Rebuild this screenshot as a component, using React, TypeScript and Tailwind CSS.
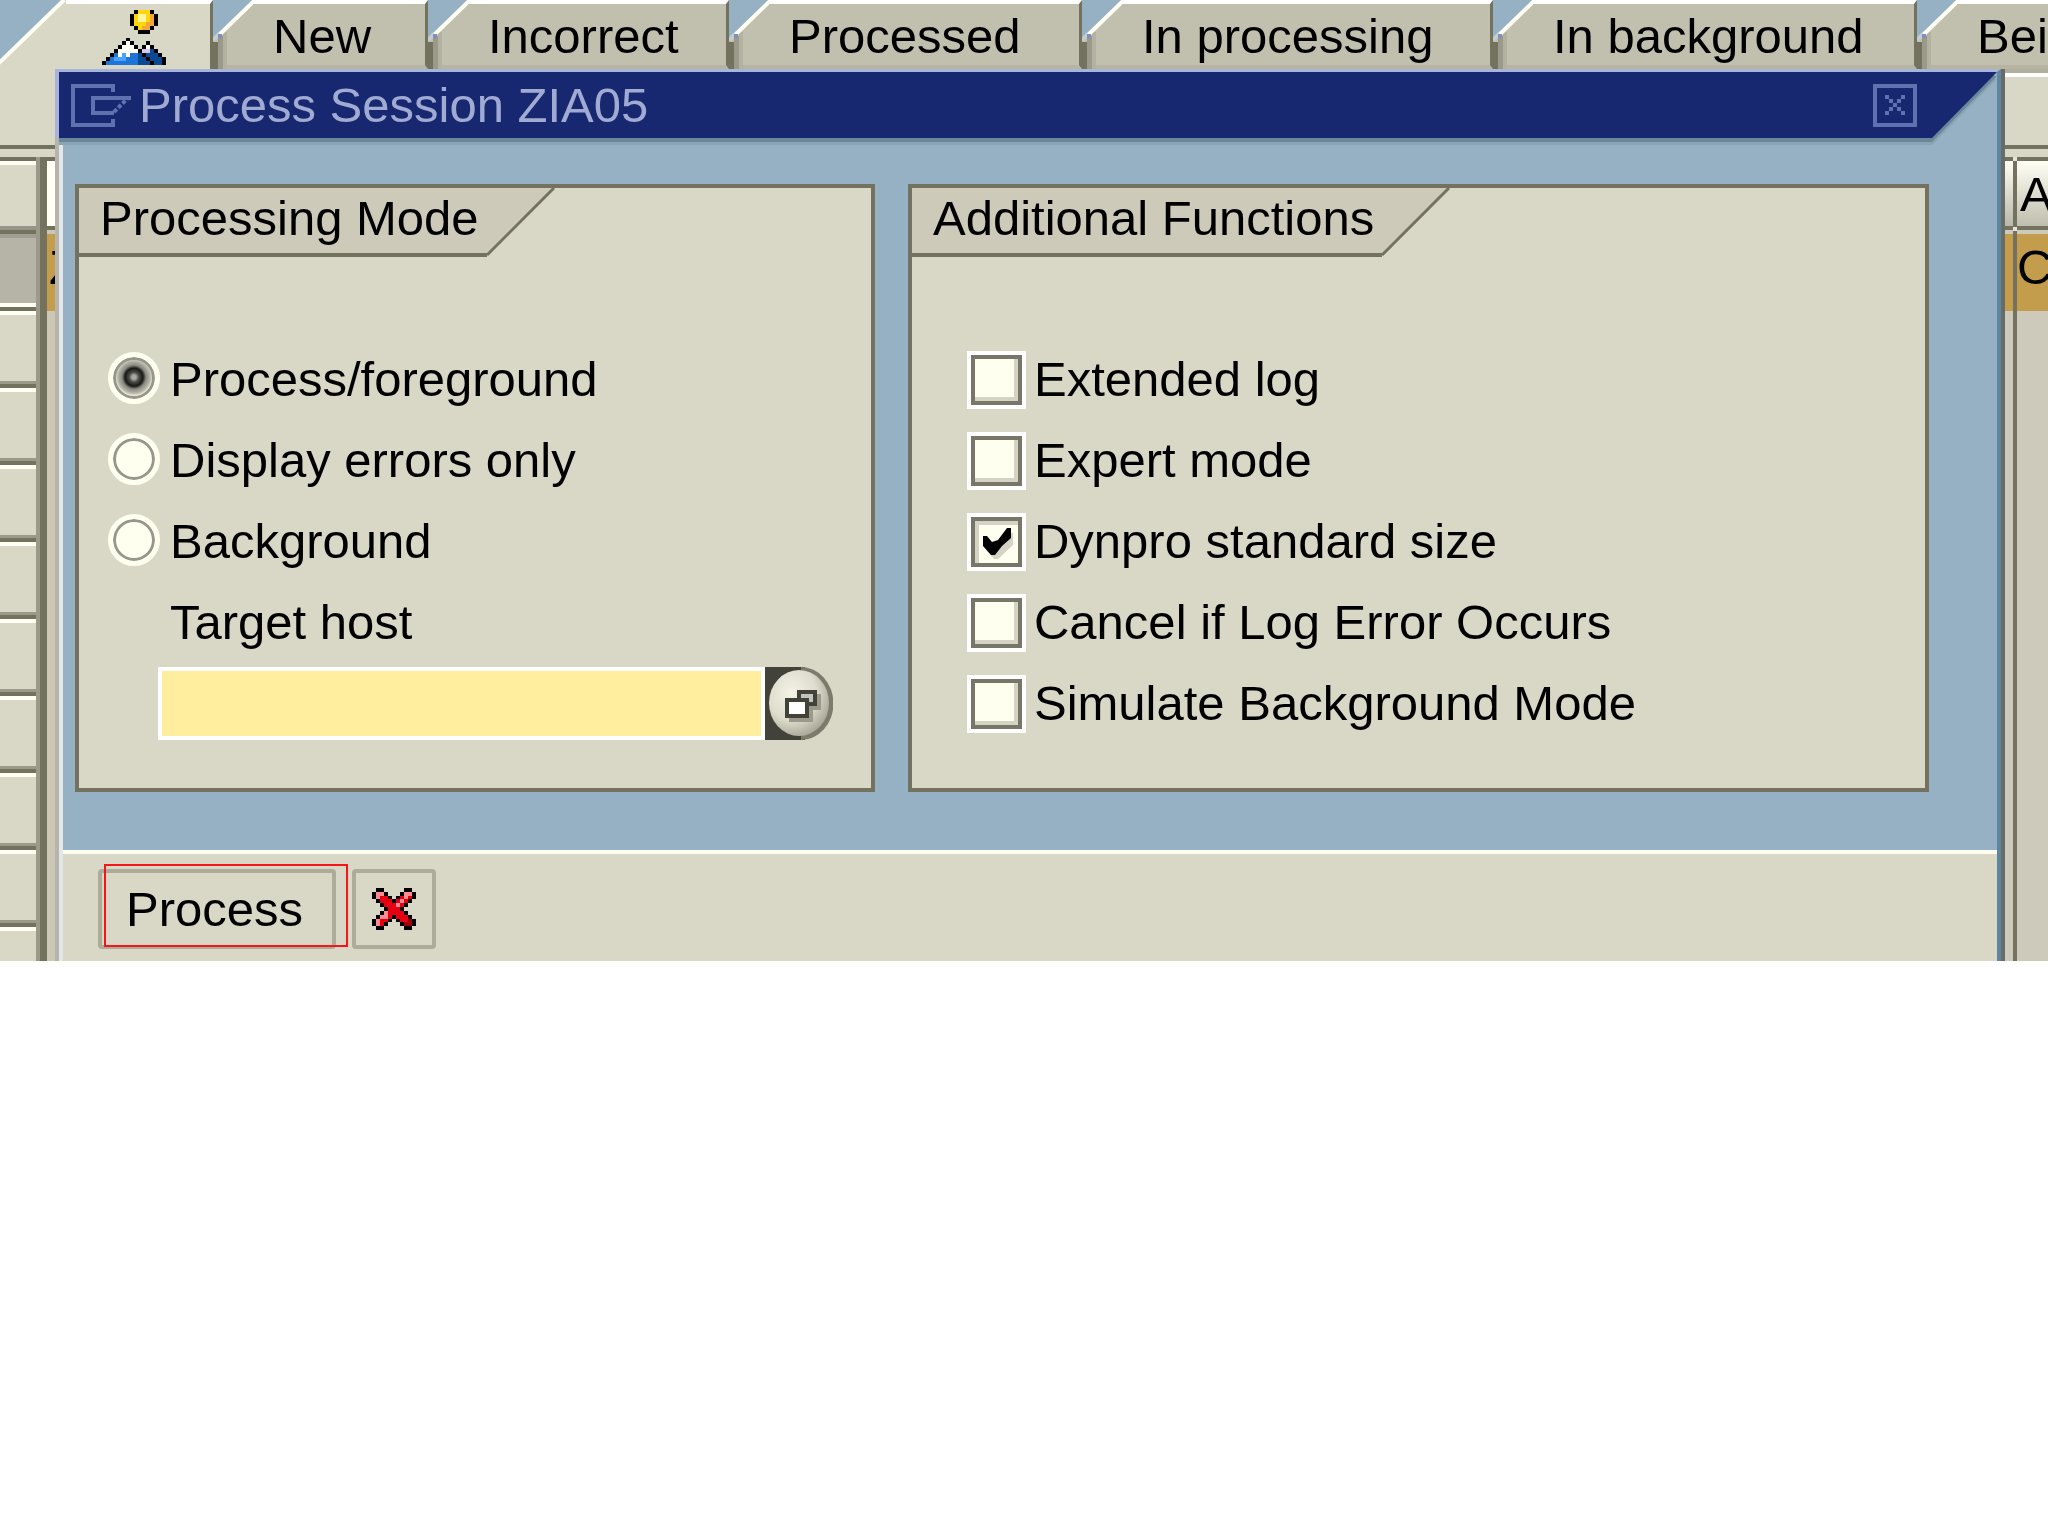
import React, { useState } from "react";

const tabs = [
  { label: "New", width: "w-[215px]" },
  { label: "Incorrect", width: "w-[301px]" },
  { label: "Processed", width: "w-[353px]" },
  { label: "In processing", width: "w-[411px]" },
  { label: "In background", width: "w-[424px]" },
  { label: "Bei", width: "w-[424px]" },
];

const modes = ["Process/foreground", "Display errors only", "Background"];

const functions = [
  "Extended log",
  "Expert mode",
  "Dynpro standard size",
  "Cancel if Log Error Occurs",
  "Simulate Background Mode",
];

const palette: Record<string, string> = {
  k: "#000000",
  w: "#fffff4",
  y: "#ffd60a",
  l: "#fff59a",
  o: "#f2a838",
  b: "#1f74d8",
  c: "#4aa3ff",
  d: "#0a4a94",
  p: "#d9c6ee",
  r: "#e60012",
  m: "#ff8a92",
  n: "#a00008",
};

const mountains = [
  "........kyyyk...",
  ".......kyllyok..",
  ".......kyllyok..",
  ".......kyyyook..",
  "........kyook...",
  ".........kkk....",
  "................",
  "......k.........",
  ".....kwk...k....",
  "....kwwwk.kwk...",
  "...kwwwwwkppdk..",
  "..kbwcwbbdkdddk.",
  ".kbcccbbbddkdddk",
  "kbbbbbbbbdddkddk",
];

const redCross = [
  ".kk.....kk.",
  "kmmk...kmmk",
  "kmrrk.krmrk",
  ".krrrkrmrk.",
  "..krrrmrk..",
  "...krrrk...",
  "..kmrrrrk..",
  ".kmmrkrrrk.",
  "kmrrk.krrnk",
  "kmrk...knnk",
  ".kk.....kk.",
];

function Pixels({ rows, className }: { rows: string[]; className: string }) {
  return (
    <svg
      viewBox={`0 0 ${rows[0].length} ${rows.length}`}
      preserveAspectRatio="none"
      shapeRendering="crispEdges"
      className={className}
      aria-hidden="true"
    >
      {rows.map((row, y) =>
        row.split("").map((c, x) =>
          c === "." ? null : <rect key={`${x}-${y}`} x={x} y={y} width={1} height={1} fill={palette[c]} />
        )
      )}
    </svg>
  );
}

function TabStrip() {
  return (
    <nav className="flex h-[69px] overflow-hidden bg-[#95b1c3]">
      {/* Active tab */}
      <button type="button" aria-label="Overview" className="flex w-[213px] shrink-0">
        <svg viewBox="0 0 66 69" className="h-[69px] w-[66px] shrink-0" aria-hidden="true">
          <path d="M0 62 L62 0 H66 V69 H0 Z" fill="#d9d8c6" />
          <path d="M-2 64 L64 0" stroke="#fffff4" strokeWidth="4" />
        </svg>
        <span className="flex h-full flex-1 border-t-4 border-r-[3px] border-t-white border-r-[#73725f] bg-[#d9d8c6] pt-[6px] pl-9">
          <Pixels rows={mountains} className="h-[55px] w-16" />
        </span>
      </button>

      {tabs.map((tab) => (
        <button key={tab.label} type="button" className={`flex shrink-0 ${tab.width}`}>
          <svg viewBox="0 0 40 69" className="h-[69px] w-10 shrink-0" aria-hidden="true">
            <path d="M0 40 L38 2 H40 V69 H0 Z" fill="#c1bfae" />
            <path d="M0 42 H5 V69 H0 Z" fill="#73725f" />
            <path d="M5 36 H10 V69 H5 Z" fill="#9b9a8a" />
            <path d="M10 32 H14 V69 H10 Z" fill="#b3b1a0" />
            <path d="M14 65 H40 V69 H14 Z" fill="#b7b4a2" />
            <path d="M6 35 L42 0" stroke="#fffff4" strokeWidth="4" />
            <path d="M0 40 L6 34" stroke="#c3cdd0" strokeWidth="4" />
            <path d="M5 34 H9 V38 H5 Z" fill="#7f8fc0" />
          </svg>
          <span className="h-full flex-1 border-t-4 border-r-[3px] border-b-4 border-t-white border-r-[#73725f] border-b-[#b7b4a2] bg-[#c1bfae] pl-5 text-left leading-[65px] whitespace-nowrap">
            {tab.label}
          </span>
        </button>
      ))}
    </nav>
  );
}

function LeftGrid() {
  return (
    <div className="flex w-[55px] shrink-0 flex-col overflow-hidden bg-[#d9d8c6] pt-[76px]" aria-hidden="true">
      <div className="h-1 bg-[#73725f]" />
      <div className="h-2" />
      <div className="flex flex-1">
        <div className="flex w-9 flex-col">
          <div className="h-[69px] border-t-4 border-[#73725f]">
            <div className="h-1 bg-[#fffff4]" />
          </div>
          <div className="h-2 border-b-4 border-[#73725f] bg-[#96958a]" />
          <div className="h-[73px] border-t-4 border-b-4 border-t-[#9f9e90] border-b-[#fffff4] bg-[#b5b4a7]" />
          <div className="h-1 bg-[#73725f]" />
          {[0, 1, 2, 3, 4, 5, 6, 7].map((row) => (
            <div key={row} className="h-[77px] border-t-4 border-b-4 border-t-[#fffff4] border-b-[#73725f]">
              <div className="h-[66px]" />
              <div className="h-[3px] bg-[#9a998a]" />
            </div>
          ))}
          <div className="flex-1 border-t-4 border-[#fffff4]" />
        </div>
        <div className="w-1 bg-[#9a998a]" />
        <div className="w-[7px] bg-[#73725f]" />
        <div className="w-2 overflow-hidden bg-[#cdc8b6]">
          <div className="h-[73px] border-t-4 border-b-4 border-[#73725f] bg-[#fffff4]" />
          <div className="h-1" />
          <div className="h-[77px] bg-[#c39d4c] pl-[2px] leading-[67px]">Z</div>
        </div>
      </div>
    </div>
  );
}

function RightGrid() {
  return (
    <div className="flex w-[43px] shrink-0 flex-col overflow-hidden bg-[#d9d8c6]" aria-hidden="true">
      <div className="h-1 bg-[#b0ae9d]" />
      <div className="h-1 bg-white" />
      <div className="h-[68px]" />
      <div className="h-1 bg-[#73725f]" />
      <div className="h-2" />
      <div className="flex flex-1 bg-[#cdcabb]">
        <div className="w-2">
          <div className="h-[73px] border-t-4 border-b-4 border-[#73725f] bg-linear-to-b from-[#fffff4] to-[#b9b8a8]" />
          <div className="h-1" />
          <div className="h-[77px] bg-[#c39d4c]" />
        </div>
        <div className="w-1 bg-[#73725f]">
          <div className="h-1 bg-[#e4e3d6]" />
          <div className="h-[66px]" />
          <div className="h-1 bg-[#e4e3d6]" />
        </div>
        <div className="flex-1 overflow-hidden">
          <div className="h-[73px] border-t-4 border-b-4 border-[#73725f] bg-linear-to-b from-[#fffff4] to-[#bfbeae] pl-[3px] leading-[67px]">
            A
          </div>
          <div className="h-1" />
          <div className="h-[77px] bg-[#c39d4c] leading-[67px]">C</div>
        </div>
      </div>
    </div>
  );
}

function GroupBox({ title, className, children }: { title: string; className: string; children: React.ReactNode }) {
  return (
    <section className={`min-w-0 border-4 border-[#73725f] bg-[#d9d8c6] ${className}`}>
      <div className="flex h-[69px]">
        <h2 className="border-b-4 border-[#73725f] bg-[#cdcaba] pr-2 pl-[21px] leading-[60px] whitespace-nowrap">{title}</h2>
        <svg viewBox="0 0 68 69" className="h-[69px] w-[68px] shrink-0" aria-hidden="true">
          <path d="M0 0 H67 L0 67 Z" fill="#cdcaba" />
          <path d="M0 67 L67 0" stroke="#73725f" strokeWidth="3" />
        </svg>
      </div>
      <div className="pt-[82px] pb-11">{children}</div>
    </section>
  );
}

export default function App() {
  const [mode, setMode] = useState(modes[0]);
  const [checked, setChecked] = useState<string[]>(["Dynpro standard size"]);
  const [host, setHost] = useState("");

  const toggle = (name: string) =>
    setChecked((prev) => (prev.includes(name) ? prev.filter((n) => n !== name) : [...prev, name]));

  return (
    <div className="min-h-screen overflow-hidden bg-white font-['Liberation_Sans',sans-serif] text-[49px] text-black">
      <TabStrip />

      <div className="flex">
        <LeftGrid />

        <div role="dialog" aria-labelledby="dialog-title" className="min-w-0 flex-1 border-r-4 border-[#686b68]">
          {/* Title bar */}
          <div className="border-t-[3px] border-r-4 border-l-4 border-t-[#a8b4da] border-r-[#5f86a0] border-l-[#a8b4da] bg-[#95b1c3]">
            <div className="[filter:drop-shadow(0_4px_0_#6b8899)_drop-shadow(0_3px_0_#88a4b5)]">
              <div className="flex h-[66px] items-center bg-[#172870] pr-20 pl-3 [clip-path:polygon(0_0,100%_0,calc(100%-65px)_100%,0_100%)]">
                <svg viewBox="0 0 60 43" className="h-[43px] w-[60px] shrink-0" fill="none" stroke="#6071b0" strokeWidth="4" aria-hidden="true">
                  <path d="M42 8 V2 H2 V41 H42 V35" />
                  <path d="M60 14 H22 V29 H43" />
                  <path d="M43 28 L57 14" strokeDasharray="4 2" />
                </svg>
                <h1 id="dialog-title" className="flex-1 pl-2 leading-[66px] text-[#a0aad2]">
                  Process Session ZIA05
                </h1>
                <button type="button" aria-label="Close" className="flex h-[43px] w-11 items-center justify-center border-4 border-[#6071b0]">
                  <svg viewBox="0 0 5 5" shapeRendering="crispEdges" className="size-5" fill="#6071b0" aria-hidden="true">
                    <path d="M0 0h1v1h-1zM4 0h1v1h-1zM1 1h1v1h-1zM3 1h1v1h-1zM2 2h1v1h-1zM1 3h1v1h-1zM3 3h1v1h-1zM0 4h1v1h-1zM4 4h1v1h-1z" />
                  </svg>
                </button>
              </div>
            </div>
          </div>

          <div className="border-l-4 border-[#b5b5ac]">
            <div className="border-r-4 border-l-4 border-r-[#5f86a0] border-l-[#e3e7e8]">
              <div className="flex gap-[33px] bg-[#95b1c3] pt-[46px] pr-[68px] pb-[58px] pl-3">
                <GroupBox title="Processing Mode" className="flex-[799]">
                  {modes.map((name) => (
                    <label key={name} className="flex h-[81px] items-center gap-2.5 pl-[29px] whitespace-nowrap">
                      <input
                        type="radio"
                        name="mode"
                        value={name}
                        checked={mode === name}
                        onChange={() => setMode(name)}
                        className="mb-1 size-[52px] shrink-0 appearance-none rounded-full border-[5px] border-[#fffff0] bg-[#fffff0] shadow-[inset_0_0_0_3px_#97968a] checked:bg-[radial-gradient(circle_at_50%_48%,#a8a8a4_0_2px,#4a4a46_5px,#181818_9px,#8b8b83_12px,#a9a99e_15px,#c8c7b8_17px,#fffff0_19px)]"
                      />
                      {name}
                    </label>
                  ))}
                  <div className="h-[81px] pl-[91px] leading-[81px]">
                    <label htmlFor="target-host">Target host</label>
                  </div>
                  <div className="flex h-[81px] items-center pr-[38px] pl-[79px]">
                    <input
                      id="target-host"
                      type="text"
                      value={host}
                      onChange={(e) => setHost(e.target.value)}
                      className="h-[73px] w-0 min-w-0 flex-1 border-4 border-white bg-[#ffee9e] px-2 outline-none"
                    />
                    <button type="button" aria-label="Select target host" className="h-[73px] w-[68px] shrink-0">
                      <svg viewBox="0 0 68 73" className="h-[73px] w-[68px]" aria-hidden="true">
                        <defs>
                          <radialGradient id="knob" cx="38%" cy="35%" r="68%">
                            <stop offset="0" stopColor="#f4f3e6" />
                            <stop offset="0.6" stopColor="#dddccd" />
                            <stop offset="1" stopColor="#a9a899" />
                          </radialGradient>
                        </defs>
                        <path d="M0 0 H40 V73 H0 Z" fill="#42423a" />
                        <path d="M36 0 A32 36 0 0 1 36 73 Z" fill="#7d7c6c" />
                        <ellipse cx="34" cy="36" rx="30" ry="33" fill="url(#knob)" />
                        <path d="M36 27 H56 V43 H36 Z M24 35 H48 V55 H24 Z" fill="#9a998b" />
                        <path d="M34 25 H50 V37 H34 Z" fill="#c4c4bf" stroke="#42423a" strokeWidth="4" />
                        <path d="M22 33 H42 V49 H22 Z" fill="#ffffff" stroke="#42423a" strokeWidth="4" />
                      </svg>
                    </button>
                  </div>
                </GroupBox>

                <GroupBox title="Additional Functions" className="flex-[1022]">
                  {functions.map((name) => (
                    <label key={name} className="flex h-[81px] items-center gap-2 pl-[55px] whitespace-nowrap">
                      <span className="relative flex h-[58px] w-[59px] shrink-0">
                        <input
                          type="checkbox"
                          checked={checked.includes(name)}
                          onChange={() => toggle(name)}
                          className="peer size-full appearance-none border-4 border-white bg-[#fffff0] shadow-[inset_0_0_0_4px_#777668,inset_-8px_-8px_0_#d5d4c4] checked:shadow-[inset_0_0_0_4px_#777668,inset_8px_8px_0_#d5d4c4]"
                        />
                        <svg
                          viewBox="0 0 59 58"
                          className="pointer-events-none absolute inset-0 hidden size-full peer-checked:block"
                          aria-hidden="true"
                        >
                          <path d="M20 27 L29 37 L46 19 V32 L31 46 H27 L20 38 Z" fill="#d5d4c4" />
                          <path d="M16 23 H20 L25 29 L31 27 L40 15 H44 V25 L35 33 L28 42 H24 L16 33 Z" fill="#000000" />
                        </svg>
                      </span>
                      {name}
                    </label>
                  ))}
                </GroupBox>
              </div>

              {/* Footer */}
              <div className="flex gap-4 border-t-4 border-[#fffff0] bg-[#d9d8c6] pt-[15px] pb-3 pl-[35px]">
                <div className="relative">
                  <button type="button" className="h-20 w-[238px] rounded-[4px] border-4 border-[#adac9b] pl-6 text-left leading-[72px]">
                    Process
                  </button>
                  <div className="pointer-events-none absolute -top-[5px] -right-3 bottom-[2px] left-[6px] border-2 border-[#f5161c]" />
                </div>
                <button type="button" aria-label="Cancel" className="flex h-20 w-[84px] items-center justify-center rounded-[4px] border-4 border-[#adac9b]">
                  <Pixels rows={redCross} className="h-[42px] w-11" />
                </button>
              </div>
            </div>
          </div>
        </div>

        <RightGrid />
      </div>
    </div>
  );
}
